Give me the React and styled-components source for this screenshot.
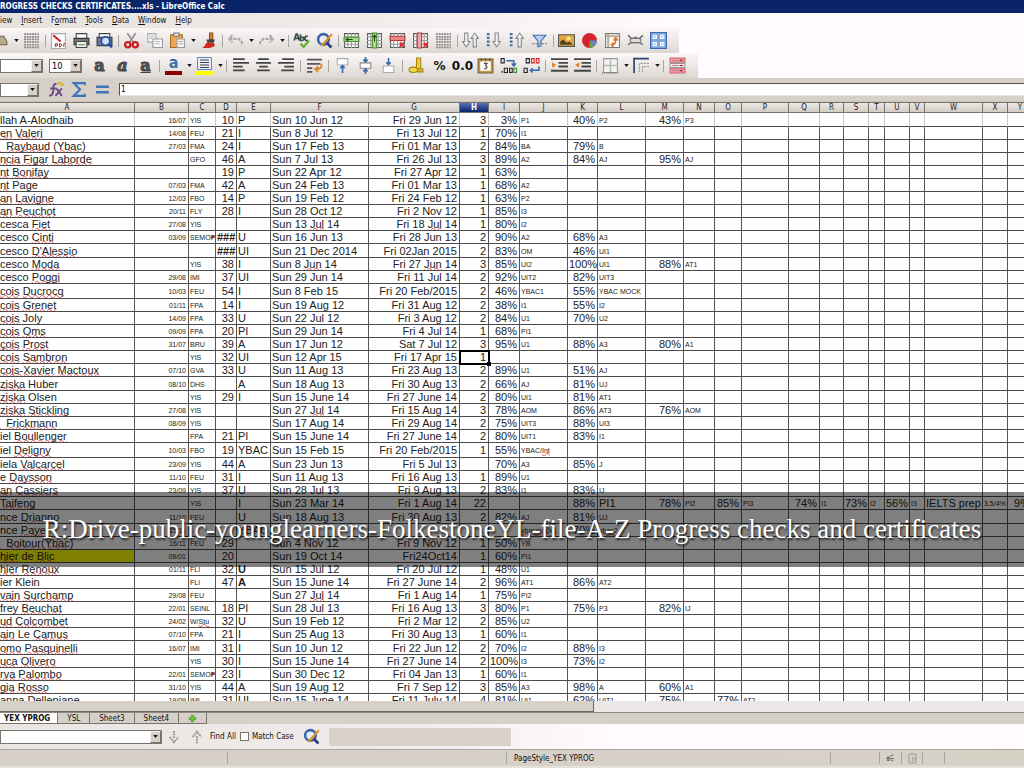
import React, { useState } from "react";
import styled, { createGlobalStyle, css } from "styled-components";

const MENUS = [
	["", "iew"],
	["I", "nsert"],
	["F", "ormat", "o"],
	["T", "ools"],
	["D", "ata"],
	["W", "indow"],
	["H", "elp"],
];

const STANDARD = [
	"open", "v", "grid", "|", "pdf", "print", "preview", "|", "cut", "copy", "paste", "v", "brush", "|",
	"undo", "v", "redo", "v", "|", "spell", "search", "|", "insRow", "insCol", "delRow", "delCol", "grid", "|",
	"sort", "sortAsc", "sortDesc", "filter", "|", "image", "chart", "pivot", "link", "nodes",
];

const FORMATTING = [
	"bold", "italic", "underline", "|", "fontColor", "v", "highlight", "v", "|",
	"alignLeft", "alignCenter", "alignRight", "|", "wrap", "|", "vTop", "vMiddle", "vBottom", "|",
	"currency", "percent", "decimal", "date", "addDec", "delDec", "|", "indent", "outdent", "|",
	"borders", "v", "lineStyle", "v", "|", "rows",
];

const COLUMNS = [
	["A", 135], ["B", 54], ["C", 27], ["D", 21], ["E", 34], ["F", 98], ["G", 91], ["H", 29], ["I", 31],
	["J", 48], ["K", 30], ["L", 48], ["M", 38], ["N", 31], ["O", 27], ["P", 47], ["Q", 31], ["R", 24],
	["S", 25], ["T", 16], ["U", 25], ["V", 15], ["W", 58], ["X", 25], ["Y", 25],
];

const SMALL = "BCJLNPRTVX";
const RIGHT = "BDGHIKMOQSUY";

// ~word~ is flagged by the spell checker, a leading * is bold, ^ is large, > is cut off
const ROWS = [
	"llah A-Alodhaib|16/07|YIS|10|P|Sun 10 Jun 12|Fri 29 Jun 12|3|3%|P1|40%|P2|43%|P3",
	"~en~ ~Valeri~|14/08|FEU|21|I|Sun 8 Jul 12|Fri 13 Jul 12|1|70%|I1",
	"~.~ ~Raybaud~ (~Ybac~)|27/03|FMA|24|I|Sun 17 Feb 13|Fri 01 Mar 13|2|84%|BA|79%|B",
	"~ncia~ ~Figar~ ~Laborde~||GFO|46|A|Sun 7 Jul 13|Fri 26 Jul 13|3|89%|A2|84%|AJ|95%|AJ",
	"~nt~ ~Bonifay~|||19|P|Sun 22 Apr 12|Fri 27 Apr 12|1|63%",
	"~nt~ Page|07/03|FMA|42|A|Sun 24 Feb 13|Fri 01 Mar 13|1|68%|A2",
	"~an~ ~Lavigne~|12/03|FBO|14|P|Sun 19 Feb 12|Fri 24 Feb 12|1|63%|P2",
	"~an~ ~Peuchot~|20/11|FLY|28|I|Sun 28 Oct 12|Fri 2 Nov 12|1|85%|I3",
	"cesca ~Fiet~|27/08|YIS|||Sun 13 ~Jul~ 14|Fri 18 ~Jul~ 14|1|80%|I2",
	"cesco ~Cinti~|03/09|>SEMOP|*###|U|Sun 16 Jun 13|Fri 28 Jun 13|2|90%|A2|68%|A3",
	"cesco ~D'Alessio~|||*###|UI|Sun 21 Dec 2014|Fri 02Jan 2015|2|83%|OM|46%|UI1",
	"cesco ~Moda~||YIS|38|I|Sun 8 ~Jun~ 14|Fri 27 ~Jun~ 14|3|85%|UI2|100%|UI1|88%|AT1",
	"cesco ~Poggi~|29/08|IMI|37|UI|Sun 29 Jun 14|Fri 11 Jul 14|2|92%|UIT2|82%|UIT3",
	"~cois~ ~Ducrocq~|10/03|FEU|54|I|Sun 8 Feb 15|Fri 20 Feb/2015|2|46%|YBAC1|55%|YBAC MOCK",
	"~cois~ ~Grenet~|01/11|FPA|14|I|Sun 19 Aug 12|Fri 31 Aug 12|2|38%|I1|55%|I2",
	"~cois~ Joly|14/09|FPA|33|U|Sun 22 Jul 12|Fri 3 Aug 12|2|84%|U1|70%|U2",
	"~cois~ ~Oms~|09/09|FPA|20|PI|Sun 29 Jun 14|Fri 4 Jul 14|1|68%|PI1",
	"~çois~ ~Prost~|31/07|BRU|39|A|Sun 17 Jun 12|Sat 7 Jul 12|3|95%|U1|88%|A3|80%|A1",
	"~cois~ ~Sambron~||YIS|32|UI|Sun 12 Apr 15|Fri 17 Apr 15|1",
	"~cois-Xavier~ ~Mactoux~|07/10|GVA|33|U|Sun 11 Aug 13|Fri 23 Aug 13|2|89%|U1|51%|AJ",
	"~ziska~ Huber|08/10|DHS||A|Sun 18 Aug 13|Fri 30 Aug 13|2|66%|AJ|81%|UJ",
	"~ziska~ Olsen||YIS|29|I|Sun 15 June 14|Fri 27 June 14|2|80%|UI1|81%|AT1",
	"~ziska~ ~Stickling~|27/08|YIS|||Sun 27 ~Jul~ 14|Fri 15 Aug 14|3|78%|AOM|86%|AT3|76%|AOM",
	"~.~ ~Frickmann~|08/09|YIS|||Sun 17 Aug 14|Fri 29 Aug 14|2|75%|UIT3|88%|UI3",
	"iel ~Boullenger~||FPA|21|PI|Sun 15 June 14|Fri 27 June 14|2|80%|UIT1|83%|I1",
	"iel ~Deligny~|10/03|FBO|19|YBAC|Sun 15 Feb 15|Fri 20 Feb/2015|1|55%|YBAC/~Int~",
	"iela ~Valcarcel~|23/09|YIS|44|A|Sun 23 Jun 13|Fri 5 Jul 13||70%|A3|85%|J",
	"e ~Daysson~|11/10|FEU|31|I|Sun 11 Aug 13|Fri 16 Aug 13|1|89%|U1",
	"~an~ ~Cassiers~|23/09|YIS|37|U|Sun 28 Jul 13|Fri 9 Aug 13|2|83%|I1|83%|IJ",
	"~Taifeng~||YIS||I|Sun 23 Mar 14|Fri 1 Aug 14|22|||88%|^PI1|78%|PI2|85%|PI3|74%|I1|73%|I2|56%|I3|IELTS prep|3.5/4%|9%",
	"nce ~Drianno~|11/10|FEU||U|Sun 18 Aug 13|Fri 30 Aug 13|2|82%|AJ|81%|UJ",
	"nce ~Paye~|15/11|||YBAC|||||~ybacmock1~|70%|~ybac2~",
	"~.~ ~Boitour~(~Ybac~)|16/11|FEU|29||Sun 4 Nov 12|Fri 9 Nov 12|1|50%|YB",
	"~hier~ de ~Blic~|09/01||20||Sun 19 Oct 14|Fri24Oct14|1|60%|PI1",
	"~hier~ ~Renoux~|01/11|FLI|32|*U|Sun 15 Jul 12|Fri 20 Jul 12|1|48%|U1",
	"ier Klein||FLI|47|*A|Sun 15 June 14|Fri 27 June 14|2|96%|AT1|86%|AT2",
	"~vain~ ~Surchamp~|29/08|FEU|||Sun 27 ~Jul~ 14|Fri 1 Aug 14|1|75%|PI2",
	"frey ~Beuchat~|22/01|SEINL|18|PI|Sun 28 Jul 13|Fri 16 Aug 13|3|80%|P1|75%|P3|82%|IJ",
	"~ud~ ~Colcombet~|24/02|W/~Stu~|32|U|Sun 19 Feb 12|Fri 2 Mar 12|2|85%|U2",
	"~ain~ Le ~Camus~|07/10|FPA|21|I|Sun 25 Aug 13|Fri 30 Aug 13|1|60%|I1",
	"~omo~ ~Pasquinelli~|16/07|IMI|31|I|Sun 10 Jun 12|Fri 22 Jun 12|2|70%|I2|88%|I3",
	"~uca~ ~Olivero~||YIS|30|I|Sun 15 June 14|Fri 27 June 14|2|100%|I3|73%|I2",
	"~rva~ ~Palombo~|22/01|>SEMOP|23|I|Sun 30 Dec 12|Fri 04 Jan 13|1|60%|I1",
	"~gia~ ~Rosso~|31/10|YIS|44|A|Sun 19 Aug 12|Fri 7 Sep 12|3|85%|A3|98%|A|60%|A1",
	"anna ~Dellepiane~|19/09|IMI|31|UI|Sun 15 June 14|Fri 11 July 14|4|81%|UI1|62%|UIT1|75%||77%|AT2",
].map((line) => line.split("|"));

const TALL_ROWS = [13, 25];
const ACTIVE_ROW = 18;
const YELLOW_ROW = 33;

const sheet = (
	<>
		<path d="M1.5 1.5h13v13h-13z" fill="#fff" stroke="#555" />
		<path d="M1 4.5h14M1 8h14M1 11.5h14M4.5 1v14M8 1v14M11.5 1v14" stroke="#999" />
	</>
);
const arrowDown = (x) => <path d={`M${x} 1v8h-2l3.5 5 3.5-5h-2V1z`} fill="#f4f4f4" stroke="#888" />;
const arrowUp = (x) => <path d={`M${x} 14V6h-2l3.5-5 3.5 5h-2v8z`} fill="#f4f4f4" stroke="#888" />;
const dots = <path d="M3 1v14" stroke="#4a6ea8" strokeWidth="2.6" strokeDasharray="2 1.5" />;

const ICONS = {
	open: <path d="M2 9l3-5h6l3 5v3H2z" fill="#b9ab8b" stroke="#6d6350" />,
	grid: (
		<path d="M1 2h14M1 4.5h14M1 7h14M1 9.5h14M1 12h14M1 14.5h14" stroke="#888" strokeWidth="1.6" strokeDasharray="1.8 .7" />
	),
	pdf: (
		<>
			<path d="M1.5 1.5h13v14h-13z" fill="#fff" stroke="#aaa" />
			<path d="M3 3l7 6" stroke="#d3242c" strokeWidth="2" />
			<path d="M5 14v-3h2v2H5M9 14v-3h1l1 1.5-1 1.500zM13 14v-3h1.5" fill="none" stroke="#a22" strokeWidth=".9" />
		</>
	),
	print: (
		<>
			<path d="M3 1.5h10v5H3z" fill="#fff" stroke="#444" />
			<path d="M1 6h14v6H1z" fill="#777" stroke="#333" />
			<path d="M3 9h10v5.5H3z" fill="#eee" stroke="#444" />
			<path d="M5 12h6" stroke="#5a9a3a" />
		</>
	),
	preview: (
		<>
			<path d="M3 1.5h10v4H3z" fill="#fff" stroke="#444" />
			<path d="M1 5h14v8H1z" fill="#68779a" stroke="#333" />
			<circle cx="9" cy="8.5" r="4" fill="#cfe0f8" stroke="#224f9c" strokeWidth="1.6" />
			<path d="M12 11.5l3 3" stroke="#224f9c" strokeWidth="2" />
		</>
	),
	cut: (
		<>
			<path d="M4 1l6 9M12 1L6 10" stroke="#999" strokeWidth="1.7" />
			<circle cx="4.5" cy="12" r="2.5" fill="none" stroke="#cc1e24" strokeWidth="2.2" />
			<circle cx="11.5" cy="12" r="2.5" fill="none" stroke="#cc1e24" strokeWidth="2.2" />
		</>
	),
	copy: (
		<>
			<path d="M1.5 1.5h8v8h-8z" fill="#f4f4f4" stroke="#aaa" />
			<path d="M6.5 6.5h9v8h-9z" fill="#f8f8f8" stroke="#999" />
			<path d="M3 4h5M3 6h3M8 9h5M8 11h5" stroke="#bbb" />
		</>
	),
	paste: (
		<>
			<path d="M1.5 2.5h11v12h-11z" fill="#e8a955" stroke="#a4691d" />
			<path d="M4.5 1h5v3h-5z" fill="#ddd" stroke="#777" />
			<path d="M7.5 6.5h7v8h-7z" fill="#f6f6f6" stroke="#999" />
			<path d="M9 9h4M9 11h4" stroke="#aaa" />
		</>
	),
	brush: (
		<>
			<path d="M9 1h3v6H9z" fill="#d88c30" stroke="#7e4b12" />
			<path d="M6 7h8l-1 3H7z" fill="#444" />
			<path d="M6 10h7l1 3c-4 3-8 2-12 2 2-1 3-3 4-5z" fill="#cf2a22" />
		</>
	),
	undo: <path d="M5 3L2 6.5 5 10M2 6.5h9l3 3v3" fill="none" stroke="#aaa" strokeWidth="2" strokeDasharray="3 1" />,
	redo: <path d="M11 3l3 3.5-3 3.5M14 6.5H5l-3 3v3" fill="none" stroke="#aaa" strokeWidth="2" strokeDasharray="3 1" />,
	spell: (
		<>
			<path d="M1 8l2-6h1l2 6M2 6h3M7 2v6h2l1-1V5H7M14 4h-2l-1 2 1 2h2" fill="none" stroke="#3b5048" strokeWidth="1.6" />
			<path d="M7 11l3 3 5-6" fill="none" stroke="#62b02e" strokeWidth="2.2" />
		</>
	),
	search: (
		<>
			<circle cx="7" cy="7" r="5" fill="#e2ebf7" stroke="#3c64a8" strokeWidth="2.4" />
			<path d="M10 10l4.5 4.5" stroke="#263f72" strokeWidth="2.6" />
			<path d="M15 2l-8 9-2 2" fill="none" stroke="#e88c22" strokeWidth="2" />
		</>
	),
	insRow: (
		<>
			{sheet}
			<path d="M1 5h14v4H1z" fill="#a7db8d" stroke="#4f8c35" />
			<path d="M3 7h6M5 5.5L3 7l2 1.5" stroke="#1e4910" fill="none" />
		</>
	),
	insCol: (
		<>
			{sheet}
			<path d="M6 1h4v14H6z" fill="#a7db8d" stroke="#4f8c35" />
			<path d="M8 3v6M6.5 5L8 3l1.5 2" stroke="#1e4910" fill="none" />
		</>
	),
	delRow: (
		<>
			{sheet}
			<path d="M1 4h14v4H1z" fill="#ee8585" stroke="#c03a3a" />
			<path d="M10 10l4 4M14 10l-4 4" stroke="#d22" strokeWidth="1.4" />
		</>
	),
	delCol: (
		<>
			{sheet}
			<path d="M5 1h4v14H5z" fill="#f4a6a6" stroke="#c03a3a" />
			<path d="M11 10l4 4M15 10l-4 4" stroke="#d22" strokeWidth="1.4" />
		</>
	),
	sort: <>{arrowDown(2.5)}{arrowUp(10.5)}</>,
	sortAsc: <>{dots}{arrowDown(9.5)}</>,
	sortDesc: <>{dots}{arrowUp(9.5)}</>,
	filter: (
		<>
			<path d="M2 3h12L9.500 8.500V13l-3 1V8.500z" fill="#b9d1ef" stroke="#3f6db0" />
			<path d="M1 11h14" stroke="#777" strokeDasharray="2 1" />
		</>
	),
	image: (
		<>
			<path d="M.5 2.5h15v11H.5z" fill="#e2a840" stroke="#555" />
			<path d="M2 12V9l3-2 3 3 3-1 3 3z" fill="#51431f" />
			<circle cx="10" cy="6" r="2" fill="#fce58a" />
		</>
	),
	chart: (
		<>
			<circle cx="8" cy="8" r="7" fill="#d4232b" />
			<path d="M8 8h7a7 7 0 0 1-3 5.5z" fill="#5a8fd6" />
			<path d="M8 8l4 5.5A7 7 0 0 1 8 15z" fill="#69a942" />
		</>
	),
	pivot: (
		<>
			<path d="M1.5 1.5h13v13h-13z" fill="#fff" stroke="#777" />
			<path d="M2 4h12M4 2v12" stroke="#bcae8e" strokeWidth="2" />
			<path d="M7 12c4 0 4-2 4-6M9 8l2-2.5L13 8M9 10l-2 2 2 2" fill="none" stroke="#e07720" strokeWidth="1.5" />
		</>
	),
	link: (
		<>
			<path d="M1 3l3 3h3l1-1 1 1h3l3-3M1 12l3-2h8l3 2" fill="none" stroke="#666" strokeWidth="1.4" />
			<rect x="3" y="6" width="10" height="4" rx="2" fill="#ddd" stroke="#777" />
		</>
	),
	nodes: (
		<>
			<path d="M.5.5h15v15H.5z" fill="#7ea7dd" stroke="#3d69ad" />
			<path d="M3 3h3v3H3zM10 3h3v3h-3zM3 10h3v3H3zM10 10h3v3h-3z" fill="#a9c6ee" stroke="#fff" />
		</>
	),
	wrap: (
		<>
			<path d="M1 2.5h14M1 6.5h12M1 10.5h5M1 14h5" stroke="#555" strokeWidth="1.5" />
			<path d="M13 6.500c3 1 2 5-4 5M11.5 9L8.500 11.5l3 2.500" fill="none" stroke="#e0842f" strokeWidth="1.7" />
		</>
	),
	vTop: (
		<>
			<path d="M3 1.5h10v6H3z" fill="#fff" stroke="#aaa" />
			<path d="M8 8v7M6 10.500L8 8l2 2.500" stroke="#3668b0" fill="none" strokeWidth="1.5" />
		</>
	),
	vMiddle: (
		<>
			<path d="M3 5.5h10v5H3z" fill="#fff" stroke="#888" />
			<path d="M8 0v4.500M8 16v-4.500M6 2.500l2 2 2-2M6 13.500l2-2 2 2" stroke="#3668b0" fill="none" strokeWidth="1.5" />
		</>
	),
	vBottom: (
		<>
			<path d="M3 8.5h10v6H3z" fill="#fff" stroke="#aaa" />
			<path d="M8 1v6M6 5l2 2 2-2" stroke="#3668b0" fill="none" strokeWidth="1.5" />
		</>
	),
	currency: (
		<>
			<path d="M8 1h4v10H8z" fill="#f1ce3b" stroke="#a8830c" />
			<ellipse cx="5" cy="12" rx="4" ry="2.5" fill="#f5d84f" stroke="#a8830c" />
			<path d="M9 11h5v3H9z" fill="#e3b92c" stroke="#a8830c" />
		</>
	),
	date: (
		<>
			<path d="M1 2h14v13H1z" fill="#c2974c" stroke="#7b5c26" />
			<path d="M3 4h10v9H3z" fill="#fffdf4" />
			<path d="M4 1v3M8 1v3M12 1v3" stroke="#555" />
			<path d="M6.5 6h3L8 8l1.500 1.500-1 1.500h-2" stroke="#444" fill="none" />
		</>
	),
	addDec: (
		<>
			<path d="M1 1.5h3v4H1zM4 10.5h3v4H4zM9 10.5h2.500v4H9z" fill="none" stroke="#222" />
			<path d="M13 10.5h2.500v4H13z" fill="none" stroke="#2d8a2d" />
			<path d="M6 3.5h7V8M11 6l2 2.500L15 6" fill="none" stroke="#3668b0" strokeWidth="1.4" />
			<path d="M1 14h1.5" stroke="#222" />
		</>
	),
	delDec: (
		<>
			<path d="M3 1.5h3v4H3zM1 10.5h3v4H1z" fill="none" stroke="#222" />
			<path d="M8 1.5h2.500v4H8zM12.500 1.5H15v4h-2.500z" fill="none" stroke="#d22" />
			<path d="M15 9v3.500H7M9 10.500l-2 2 2 2" fill="none" stroke="#3668b0" strokeWidth="1.4" />
		</>
	),
	indent: (
		<>
			<path d="M0 2h16M7 5.5h9M7 9h9M0 13h16" stroke="#444" strokeWidth="1.8" />
			<path d="M1 5l4 2.500L1 10z" fill="#e2812b" />
		</>
	),
	outdent: (
		<>
			<path d="M0 2h16M7 5.5h9M7 9h9M0 13h16" stroke="#444" strokeWidth="1.8" />
			<path d="M5 5L1 7.500 5 10z" fill="#e2812b" />
		</>
	),
	borders: (
		<>
			<path d="M1.5 1.5h13v13h-13z" fill="#f3f5f0" stroke="#999" />
			<path d="M8 2v12M2 8h12" stroke="#b4bdb4" strokeWidth="1.6" />
			<path d="M0 15h16" stroke="#555" strokeDasharray="1 1" />
		</>
	),
	lineStyle: (
		<>
			<path d="M1 15V1.5h14" fill="none" stroke="#2a456e" strokeWidth="1.6" />
			<path d="M6 14V6h9M9 14V9h6" fill="none" stroke="#999" strokeDasharray="2 1" />
		</>
	),
	rows: (
		<>
			<path d="M1 1h14v4H1zM1 11h14v4H1z" fill="#f3a0a6" stroke="#d0606a" />
			<path d="M1 6h14v4H1z" fill="#eee" stroke="#999" />
			<path d="M3 3h6M3 13h6M3 8h6" stroke="#c77" />
			<path d="M10 3h3M10 13h3M10 8h3" stroke="#812" />
		</>
	),
	fx: (
		<>
			<path d="M8 3C5 2 5 5 5 8s-1 6-4 6M2 7h6M8 7l5 7M13 7l-6 7" fill="none" stroke="#6d4a86" strokeWidth="1.8" />
			<path d="M9 3l2-2M12 4l3-1M12 1v2" stroke="#e3b020" strokeWidth="1.8" />
		</>
	),
	sigma: <path d="M13 4V2H2.500l6 6-6 6H13v-2" fill="none" stroke="#3d74bd" strokeWidth="2" />,
	equals: <path d="M2 5.5h12M2 10.5h12" stroke="#3f73b7" strokeWidth="2.4" />,
	findNext: <path d="M8 1v8M3 8l5 6 5-6" fill="none" stroke="#999" strokeWidth="2.4" strokeDasharray="2 1" />,
	findPrev: <path d="M8 15V7M3 8l5-6 5 6" fill="none" stroke="#999" strokeWidth="2.4" strokeDasharray="2 1" />,
	plus: <path d="M6 2h4v4h4v4h-4v4H6v-4H2V6h4z" fill="#67c62c" stroke="#3c8718" />,
	record: <path d="M2 9h7M3 6.5h5M3 11.5h5M9 5l4-2M10 9h4M10 11l3 2" stroke="#555" strokeWidth="1.6" />,
	doc: (
		<>
			<path d="M3 1.5h10v13H3z" fill="none" stroke="#999" strokeWidth="1.4" />
			<path d="M8 6l5 3-5 3z" fill="none" stroke="#999" />
		</>
	),
	alignLeft: <path d="M1 2h11M1 5.5h15M1 9h9M1 12.5h11" stroke="#444" strokeWidth="1.7" />,
	alignCenter: <path d="M3 2h10M1 5.5h14M4 9h8M2 12.5h12" stroke="#444" strokeWidth="1.7" />,
	alignRight: <path d="M4 2h11M0 5.5h15M6 9h9M3 12.5h12" stroke="#444" strokeWidth="1.7" />,
};

function Icon({ name, size = 17 }) {
	return (
		<svg width={size} height={size} viewBox="0 0 16 16" aria-hidden="true">
			{ICONS[name]}
		</svg>
	);
}

function Caret() {
	return (
		<svg width="5" height="3" viewBox="0 0 6 4" aria-hidden="true">
			<path d="M0 0h6L3 4z" fill="#111" />
		</svg>
	);
}

function ToolFace({ name }) {
	switch (name) {
		case "bold":
			return <Letter>a</Letter>;
		case "italic":
			return <Letter $italic>a</Letter>;
		case "underline":
			return <Letter $underline>a</Letter>;
		case "fontColor":
			return <ColorLetter $bar="#8b0000">a</ColorLetter>;
		case "highlight":
			return (
				<svg width="18" height="18" viewBox="0 0 18 18" aria-hidden="true">
					<path d="M1.5.5h14v12h-14z" fill="#e8eef8" stroke="#5f86bd" />
					<path d="M4 3h9M4 5.5h9M4 8h9M4 10.5h9" stroke="#444" />
					<path d="M0 14h17v4H0z" fill="#ff0" />
				</svg>
			);
		case "percent":
			return <Figure>%</Figure>;
		case "decimal":
			return <Figure>0.0</Figure>;
		default:
			return <Icon name={name} />;
	}
}

function Tools({ items }) {
	return items.map((name, i) => {
		if (name === "|") return <Separator key={i} />;
		if (name === "v") {
			return (
				<CaretButton key={i} aria-label={`${items[i - 1]} options`}>
					<Caret />
				</CaretButton>
			);
		}
		return (
			<ToolButton key={i} aria-label={name}>
				<ToolFace name={name} />
			</ToolButton>
		);
	});
}

function Combo({ label, value, width }) {
	return (
		<ComboBox $width={width}>
			<select aria-label={label} defaultValue={value}>
				<option>{value}</option>
			</select>
			<span>
				<Caret />
			</span>
		</ComboBox>
	);
}

function CellText({ text }) {
	return text
		.split("~")
		.map((part, i) => (i % 2 ? <Misspelt key={i}>{part === "." ? "\u00a0" : part}</Misspelt> : part));
}

function Row({ cells, index }) {
	return (
		<SheetRow $tall={TALL_ROWS.includes(index)}>
			{COLUMNS.map(([letter], i) => {
				const raw = cells[i] || "";
				const mark = "*^>".includes(raw[0]) ? raw[0] : "";
				return (
					<Cell
						key={letter}
						$small={SMALL.includes(letter) && mark !== "^"}
						$right={RIGHT.includes(letter)}
						$bold={mark === "*"}
						$cut={mark === ">"}
						$yellow={index === YELLOW_ROW && letter === "A"}
						$active={index === ACTIVE_ROW && letter === "H"}
					>
						<CellText text={mark ? raw.slice(1) : raw} />
					</Cell>
				);
			})}
		</SheetRow>
	);
}

function App() {
	const [tab, setTab] = useState("YEX YPROG");
	const [formula, setFormula] = useState("1");

	return (
		<Window>
			<GlobalStyle />
			<TitleBar>ROGRESS CHECKS CERTIFICATES....xls - LibreOffice Calc</TitleBar>
			<MenuBar>
				{MENUS.map(([key, rest, accel]) => (
					<button key={rest}>
						{accel ? key : <u>{key}</u>}
						{accel ? (
							<>
								<u>{accel}</u>
								{rest.slice(1)}
							</>
						) : (
							rest
						)}
					</button>
				))}
			</MenuBar>
			<ToolRow>
				<Toolbar $bleed>
					<Tools items={STANDARD} />
				</Toolbar>
			</ToolRow>
			<ToolRow>
				<Toolbar $roomy>
					<Combo label="Font name" value="" width={43} />
					<ComboGap />
					<Combo label="Font size" value="10" width={33} />
					<ComboGap />
					<Tools items={FORMATTING} />
				</Toolbar>
			</ToolRow>
			<FormulaBar>
				<Combo label="Name box" value="" width={39} />
				<FormulaTools>
					<Tools items={["fx", "sigma", "equals"]} />
				</FormulaTools>
				<input aria-label="Formula" value={formula} onChange={(e) => setFormula(e.target.value)} />
			</FormulaBar>

			<SheetArea>
				<SheetTable>
					<colgroup>
						{COLUMNS.map(([letter, width]) => (
							<col key={letter} width={width} />
						))}
					</colgroup>
					<thead>
						<tr>
							{COLUMNS.map(([letter]) => (
								<ColumnHead key={letter} scope="col" $active={letter === "H"}>
									{letter}
								</ColumnHead>
							))}
						</tr>
					</thead>
					<tbody>
						{ROWS.map((cells, i) => (
							<Row key={i} cells={cells} index={i} />
						))}
					</tbody>
				</SheetTable>
				<Caption>
					R:Drive-public-younglearners-FolkestoneYL-file-A-Z Progress checks and certificates
				</Caption>
			</SheetArea>

			<ScrollTrack>
				<ScrollThumb />
			</ScrollTrack>
			<Tabs>
				{["YEX YPROG", "YSL", "Sheet3", "Sheet4"].map((name) => (
					<Tab key={name} $active={name === tab} onClick={() => setTab(name)}>
						{name}
					</Tab>
				))}
				<Tab aria-label="Add sheet">
					<Icon name="plus" size={9} />
				</Tab>
			</Tabs>
			<FindBar>
				<Combo label="Find" value="" width={162} />
				<ToolButton aria-label="Find next">
					<Icon name="findNext" size={14} />
				</ToolButton>
				<ToolButton aria-label="Find previous">
					<Icon name="findPrev" size={14} />
				</ToolButton>
				<FindAll>Find All</FindAll>
				<MatchCase>
					<input type="checkbox" />
					Match Case
				</MatchCase>
				<ToolButton aria-label="Find and replace">
					<Icon name="search" />
				</ToolButton>
				<FindFill />
			</FindBar>
			<StatusBar>
				<StatusCell $grow={230} />
				<StatusCell $grow={282} />
				<StatusCell $grow={320}>PageStyle_YEX YPROG</StatusCell>
				<StatusCell $grow={49} />
				<StatusCell $grow={21}>
					<Icon name="record" size={10} />
				</StatusCell>
				<StatusCell $grow={21}>
					<Icon name="doc" size={11} />
				</StatusCell>
				<StatusCell $grow={21} />
				<StatusCell $grow={80} $last />
			</StatusBar>
		</Window>
	);
}

const GlobalStyle = createGlobalStyle`
	* {
		box-sizing: border-box;
	}
	body {
		margin: 0;
		overflow: hidden;
		font-family: "DejaVu Sans Condensed", "DejaVu Sans", sans-serif;
		font-size: 8px;
		color: #111;
	}
	button {
		margin: 0;
		padding: 0;
		border: none;
		background: none;
		font: inherit;
		color: inherit;
	}
	svg {
		display: block;
		flex-shrink: 0;
	}
`;

const Window = styled.div`
	display: flex;
	flex-direction: column;
	height: 100vh;
	background: #d6d0c8;
`;

const TitleBar = styled.header`
	flex-shrink: 0;
	height: 13px;
	line-height: 13px;
	background: #0a246a;
	color: #fff;
	font-size: 8px;
	font-weight: bold;
	white-space: nowrap;
	overflow: hidden;
`;

const MenuBar = styled.nav`
	display: flex;
	flex-shrink: 0;
	gap: 9px;
	height: 15px;
	background: linear-gradient(90deg, #e6e1dc, #f1ecea 35%, #fffbfe 66%);
`;

const ToolRow = styled.div`
	flex-shrink: 0;
	height: 25px;
	background: #fffbfe;
`;

const Toolbar = styled.div`
	display: flex;
	align-items: center;
	width: max-content;
	height: 25px;
	padding-right: 9px;
	margin-left: ${(props) => (props.$bleed ? "-11px" : "0")};
	background: linear-gradient(#fbf7f8, #ece8e6 50%, #dcd7d1);
	--sep-space: ${(props) => (props.$roomy ? "2px" : "1px")};
`;

const ToolButton = styled.button`
	display: flex;
	align-items: center;
	justify-content: center;
	flex-shrink: 0;
	width: 23px;
	height: 20px;
`;

const CaretButton = styled(ToolButton)`
	width: 8px;
`;

const Separator = styled.span`
	flex-shrink: 0;
	width: 1px;
	height: 12px;
	margin: 0 var(--sep-space) 0 2px;
	background: #aaa59f;
`;

const Letter = styled.span`
	color: #555;
	font-family: "DejaVu Serif", serif;
	font-size: 16px;
	line-height: 14px;
	font-weight: bold;
	font-style: ${(props) => (props.$italic ? "italic" : "normal")};
	text-decoration: ${(props) => (props.$underline ? "underline" : "none")};
	-webkit-text-stroke: 1px #444;
`;

const ColorLetter = styled.span`
	width: 17px;
	height: 18px;
	border-bottom: 4px solid ${(props) => props.$bar};
	color: #3f6fae;
	font-size: 16px;
	line-height: 11px;
	font-weight: bold;
	text-align: center;
`;

const Figure = styled.span`
	font-family: "DejaVu Sans", sans-serif;
	font-size: 12px;
	font-weight: bold;
`;

const ComboBox = styled.div`
	position: relative;
	flex-shrink: 0;
	width: ${(props) => props.$width}px;
	height: 14px;

	select {
		appearance: none;
		display: block;
		width: 100%;
		height: 100%;
		padding: 0 2px;
		border: 1px solid #77736d;
		border-radius: 0;
		background: #fff;
		font-family: inherit;
		font-size: 9px;
	}

	span {
		position: absolute;
		top: 1px;
		right: 1px;
		bottom: 1px;
		display: flex;
		align-items: center;
		justify-content: center;
		width: 11px;
		border: 1px solid;
		border-color: #f5f2ee #77736d #77736d #f5f2ee;
		background: #d6d0c8;
		pointer-events: none;
	}
`;

const ComboGap = styled.span`
	width: 6px;
`;

const FormulaBar = styled.div`
	display: flex;
	align-items: center;
	flex-shrink: 0;
	height: 24px;
	border-bottom: 1px solid #c9c3bb;
	background: #d6d0c8;

	> input {
		flex: 1;
		min-width: 0;
		height: 13px;
		padding: 0 1px;
		border: 1px solid #55524d;
		border-right: none;
		border-bottom-color: #e9e5e0;
		background: #fff;
		font-family: inherit;
		font-size: 8px;
	}
`;

const FormulaTools = styled.div`
	display: flex;
	padding: 0 5px 0 6px;
`;

const SheetArea = styled.main`
	position: relative;
	flex: 1;
	min-height: 0;
	overflow: hidden;
	background: #fff;
`;

const SheetTable = styled.table`
	width: 100%;
	table-layout: fixed;
	border-collapse: separate;
	border-spacing: 0;
	font-family: "Liberation Sans", Arial, sans-serif;
	color: #222;
`;

const ColumnHead = styled.th`
	height: 11px;
	padding: 0;
	border: solid #77736d;
	border-width: 1px 1px 1px 0;
	background: ${(props) => (props.$active ? "linear-gradient(#5672b4, #0a246a)" : "linear-gradient(#ebe7e3, #d3cdc5)")};
	color: ${(props) => (props.$active ? "#fff" : "#222")};
	font-family: "DejaVu Sans Condensed", "DejaVu Sans", sans-serif;
	font-size: 8px;
	line-height: 9px;
	font-weight: ${(props) => (props.$active ? "bold" : "normal")};
`;

const Cell = styled.td`
	position: relative;
	padding: 0 2px 0 1px;
	border-right: 1px solid #555;
	border-bottom: 1px solid #4a4a4a;
	background: ${(props) => (props.$yellow ? "#ff0" : "transparent")};
	font-size: 11px;
	line-height: 12px;
	font-weight: ${(props) => (props.$bold ? "bold" : "normal")};
	text-align: ${(props) => (props.$right ? "right" : "left")};
	vertical-align: middle;
	white-space: nowrap;
	overflow: hidden;

	&:first-child {
		padding-left: 0;
	}

	${(props) =>
		props.$small &&
		css`
			padding-top: 2px;
			font-size: 7px;
			line-height: 10px;
		`}

	${(props) =>
		props.$cut &&
		css`
			&::after {
				content: "";
				position: absolute;
				top: 4px;
				right: 0;
				border: 2px solid transparent;
				border-left: 3px solid #a11;
				border-right: none;
			}
		`}

	${(props) =>
		props.$active &&
		css`
			overflow: visible;
			z-index: 1;
			outline: 2px solid #000;
			outline-offset: -1px;

			&::after {
				content: "";
				position: absolute;
				right: -3px;
				bottom: -3px;
				width: 4px;
				height: 4px;
				background: #000;
			}
		`}
`;

const SheetRow = styled.tr`
	height: ${(props) => (props.$tall ? "15px" : "13px")};

	&:nth-child(10n + 1) {
		height: 14px;
	}

	&:first-child ${Cell} {
		border-right-color: #ccc;
	}
`;

const Misspelt = styled.span`
	text-decoration: underline wavy #e85050 1px;
	text-underline-offset: -1px;
	text-decoration-skip-ink: none;
`;

const Caption = styled.p`
	position: absolute;
	left: 0;
	right: 0;
	bottom: 134px;
	z-index: 2;
	height: 75px;
	margin: 0;
	background: rgba(0, 0, 0, 0.5);
	color: #fff;
	font-family: "Liberation Serif", serif;
	font-size: 27px;
	line-height: 75px;
	text-align: center;
	text-shadow: 1px 2px 2px rgba(0, 0, 0, 0.7);
	white-space: nowrap;
`;

const ScrollTrack = styled.div`
	flex-shrink: 0;
	height: 12px;
	border-bottom: 1px solid #8d8984;
	background: #ece7e7;
`;

const ScrollThumb = styled.div`
	width: 58%;
	height: 11px;
	border-right: 1px solid #666;
	border-bottom: 1px solid #666;
	background: #d6d0c8;
`;

const Tabs = styled.div`
	display: flex;
	flex-shrink: 0;
	height: 11px;
`;

const Tab = styled.button`
	display: flex;
	align-items: center;
	padding: 0 9px;
	border-right: 1px solid #77736d;
	border-bottom: 1px solid #77736d;
	background: ${(props) => (props.$active ? "#fff" : "#d6d0c8")};
	font-weight: ${(props) => (props.$active ? "bold" : "normal")};

	&:first-child {
		padding: 0 7px 0 4px;
	}
`;

const FindBar = styled.div`
	display: flex;
	align-items: center;
	flex-shrink: 0;
	height: 26px;
	border-bottom: 1px solid #aaa59f;
	background: linear-gradient(90deg, #e9e5e1, #f1ecec 40%, #fffbfe 60%);
`;

const FindAll = styled.button`
	margin: 0 4px 0 2px;
`;

const MatchCase = styled.label`
	display: flex;
	align-items: center;
	gap: 3px;
	margin-right: 6px;

	input {
		appearance: none;
		width: 9px;
		height: 9px;
		margin: 0;
		border: 1px solid #77736d;
		background: #fff;
	}
`;

const FindFill = styled.div`
	width: 182px;
	height: 18px;
	margin-left: 6px;
	background: #d8d2cb;
`;

const StatusBar = styled.footer`
	display: flex;
	align-items: center;
	flex-shrink: 0;
	height: 18px;
	border-bottom: 2px solid #e4e0da;
	background: linear-gradient(90deg, #d6d0c8 50%, #d8d0ca 80%, #d4d2c4);
`;

const StatusCell = styled.div`
	display: flex;
	align-items: center;
	justify-content: ${(props) => (props.$grow < 30 ? "center" : "flex-start")};
	flex: ${(props) => props.$grow} 1 0;
	min-width: 0;
	height: 12px;
	padding-left: ${(props) => (props.$grow > 300 ? "7px" : "0")};
	border-right: ${(props) => (props.$last ? "none" : "1px solid #aaa59f")};
	white-space: nowrap;
`;

export default App;
